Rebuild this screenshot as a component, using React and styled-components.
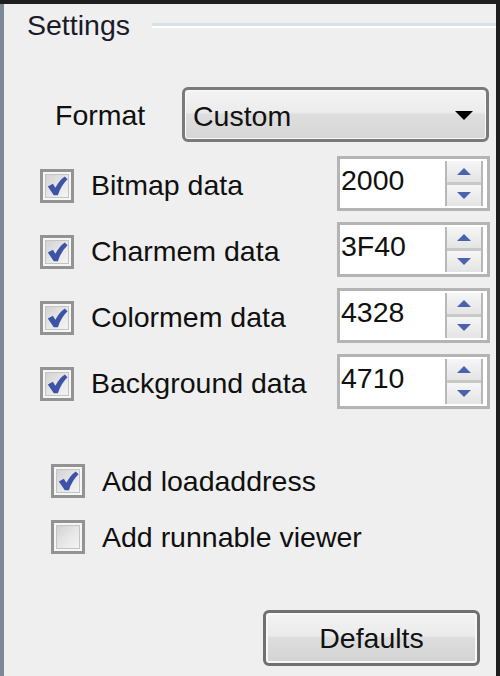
import styled, { createGlobalStyle } from 'styled-components';

const GlobalStyle = createGlobalStyle`
  html, body {
    margin: 0;
    padding: 0;
    background: #1e1e1e;
  }
  body {
    font-family: "Liberation Sans", Arial, sans-serif;
  }
`;

const rows = [
  { label: 'Bitmap data', value: '2000' },
  { label: 'Charmem data', value: '3F40' },
  { label: 'Colormem data', value: '4328' },
  { label: 'Background data', value: '4710' },
];

const CheckMark = () => (
  <svg width="22" height="22" viewBox="0 0 24 24">
    <path
      d="M2 12.5 L7.5 9.5 L10.2 14 Q14 6 20.5 1.5 L23.5 4.5 Q16.5 11 13 22 L8.5 22 Z"
      fill="#3d53a8"
    />
  </svg>
);

const Checkbox = ({ checked }) => (
  <CheckOuter>
    <CheckInner>{checked ? <CheckMark /> : null}</CheckInner>
  </CheckOuter>
);

const Triangle = ({ dir, color, w, h }) => (
  <svg width={w} height={h} viewBox={`0 0 ${w} ${h}`}>
    {dir === 'up' ? (
      <polygon points={`0,${h} ${w / 2},0 ${w},${h}`} fill={color} />
    ) : (
      <polygon points={`0,0 ${w},0 ${w / 2},${h}`} fill={color} />
    )}
  </svg>
);

const SpinBox = ({ value }) => (
  <SpinFrame>
    <SpinValue>{value}</SpinValue>
    <SpinButtons>
      <SpinButton>
        <Triangle dir="up" color="#4a62b0" w={14} h={7} />
      </SpinButton>
      <SpinButton>
        <Triangle dir="down" color="#4a62b0" w={14} h={7} />
      </SpinButton>
    </SpinButtons>
  </SpinFrame>
);

export default function App() {
  return (
    <>
      <GlobalStyle />
      <Frame>
        <Panel>
          <Header>
            <Legend>Settings</Legend>
            <HeaderLine />
          </Header>

          <FormatRow>
            <Label>Format</Label>
            <Combo>
              <ComboText>Custom</ComboText>
              <Triangle dir="down" color="#000" w={18} h={9} />
            </Combo>
          </FormatRow>

          <DataRows>
            {rows.map(r => (
              <DataRow key={r.label}>
                <CheckCell>
                  <Checkbox checked />
                </CheckCell>
                <Label>{r.label}</Label>
                <SpinBox value={r.value} />
              </DataRow>
            ))}
          </DataRows>

          <Options>
            <OptionRow>
              <Checkbox checked />
              <Label>Add loadaddress</Label>
            </OptionRow>
            <OptionRow>
              <Checkbox />
              <Label>Add runnable viewer</Label>
            </OptionRow>
          </Options>

          <ButtonRow>
            <PushButton>Defaults</PushButton>
          </ButtonRow>
        </Panel>
      </Frame>
    </>
  );
}

const Frame = styled.div`
  width: 500px;
  height: 676px;
  box-sizing: border-box;
  padding: 4px 4px 0 0;
  background: #1e1e1e;
  overflow: hidden;
`;

const Panel = styled.div`
  height: 100%;
  box-sizing: border-box;
  background: #efefef;
  border-left: 4px solid #7d8796;
  padding-top: 5px;
  color: #111;
  font-size: 28.5px;
`;

const Header = styled.div`
  display: flex;
  align-items: center;
  height: 32px;
  padding-left: 23px;
`;

const Legend = styled.div`
  line-height: 32px;
  color: #1a1a2a;
`;

const HeaderLine = styled.div`
  flex: 1;
  margin-left: 22px;
  margin-top: 1px;
  border-top: 3px solid #d8e1e7;
  border-bottom: 2px solid #ffffff;
`;

const Label = styled.span`
  line-height: 32px;
  white-space: nowrap;
  color: #101010;
`;

const FormatRow = styled.div`
  display: flex;
  align-items: center;
  height: 55px;
  margin-top: 46px;
  padding-left: 51px;

  ${Label} {
    width: 127px;
  }
`;

const Combo = styled.div`
  width: 307px;
  height: 55px;
  box-sizing: border-box;
  display: flex;
  align-items: center;
  justify-content: space-between;
  padding: 2px 13px 0 8px;
  border: 3px solid #7a7a7a;
  border-radius: 6px;
  background: linear-gradient(#f3f3f3 0%, #ececec 45%, #dedede 50%, #d6d6d6 100%);
  box-shadow: inset 0 0 0 1px #fbfbfb;
`;

const ComboText = styled.span`
  line-height: 32px;
`;

const DataRows = styled.div`
  display: flex;
  flex-direction: column;
  gap: 11px;
  margin-top: 14px;
`;

const DataRow = styled.div`
  display: flex;
  align-items: center;
  height: 55px;
  padding-left: 36px;

  ${Label} {
    width: 246px;
    padding-top: 2px;
  }
`;

const CheckCell = styled.div`
  width: 51px;
  padding-top: 5px;
`;

const CheckOuter = styled.div`
  width: 34px;
  height: 34px;
  box-sizing: border-box;
  border: 3px solid #939393;
  background: #f6f6f6;
  padding: 2px;
  flex-shrink: 0;
`;

const CheckInner = styled.div`
  width: 100%;
  height: 100%;
  box-sizing: border-box;
  border: 1px solid #c4c4c4;
  background: linear-gradient(135deg, #d2d2d2 0%, #e6e6e6 50%, #f4f4f4 100%);
  display: flex;
  align-items: center;
  justify-content: center;
`;

const SpinFrame = styled.div`
  width: 153px;
  height: 55px;
  box-sizing: border-box;
  border: 3px solid #b4b4b4;
  background: #fff;
  display: flex;
  align-items: center;
  padding: 0 4px 0 1px;
`;

const SpinValue = styled.span`
  flex: 1;
  line-height: 32px;
  margin-top: -8px;
`;

const SpinButtons = styled.div`
  width: 38px;
  height: 45px;
  display: flex;
  flex-direction: column;
  gap: 3px;
  border-left: 2px solid #b8b8b8;
  border-right: 2px solid #b8b8b8;
  box-sizing: border-box;
  background: #c8c8c8;
`;

const SpinButton = styled.div`
  flex: 1;
  display: flex;
  align-items: center;
  justify-content: center;
  background: linear-gradient(#f6f6f6, #e4e4e4);
`;

const Options = styled.div`
  display: flex;
  flex-direction: column;
  gap: 22px;
  margin-top: 55px;
  padding-left: 47px;
`;

const OptionRow = styled.div`
  display: flex;
  align-items: center;
  gap: 17px;
  height: 34px;
`;

const ButtonRow = styled.div`
  display: flex;
  margin-top: 56px;
  padding-left: 259px;
`;

const PushButton = styled.div`
  width: 217px;
  height: 56px;
  box-sizing: border-box;
  display: flex;
  align-items: center;
  justify-content: center;
  border: 3px solid #707070;
  border-radius: 6px;
  background: linear-gradient(#f3f3f3 0%, #ebebeb 45%, #dddddd 50%, #d3d3d3 100%);
  box-shadow: inset 0 0 0 2px #f8f8f8;
  line-height: 32px;
  color: #111;
`;
